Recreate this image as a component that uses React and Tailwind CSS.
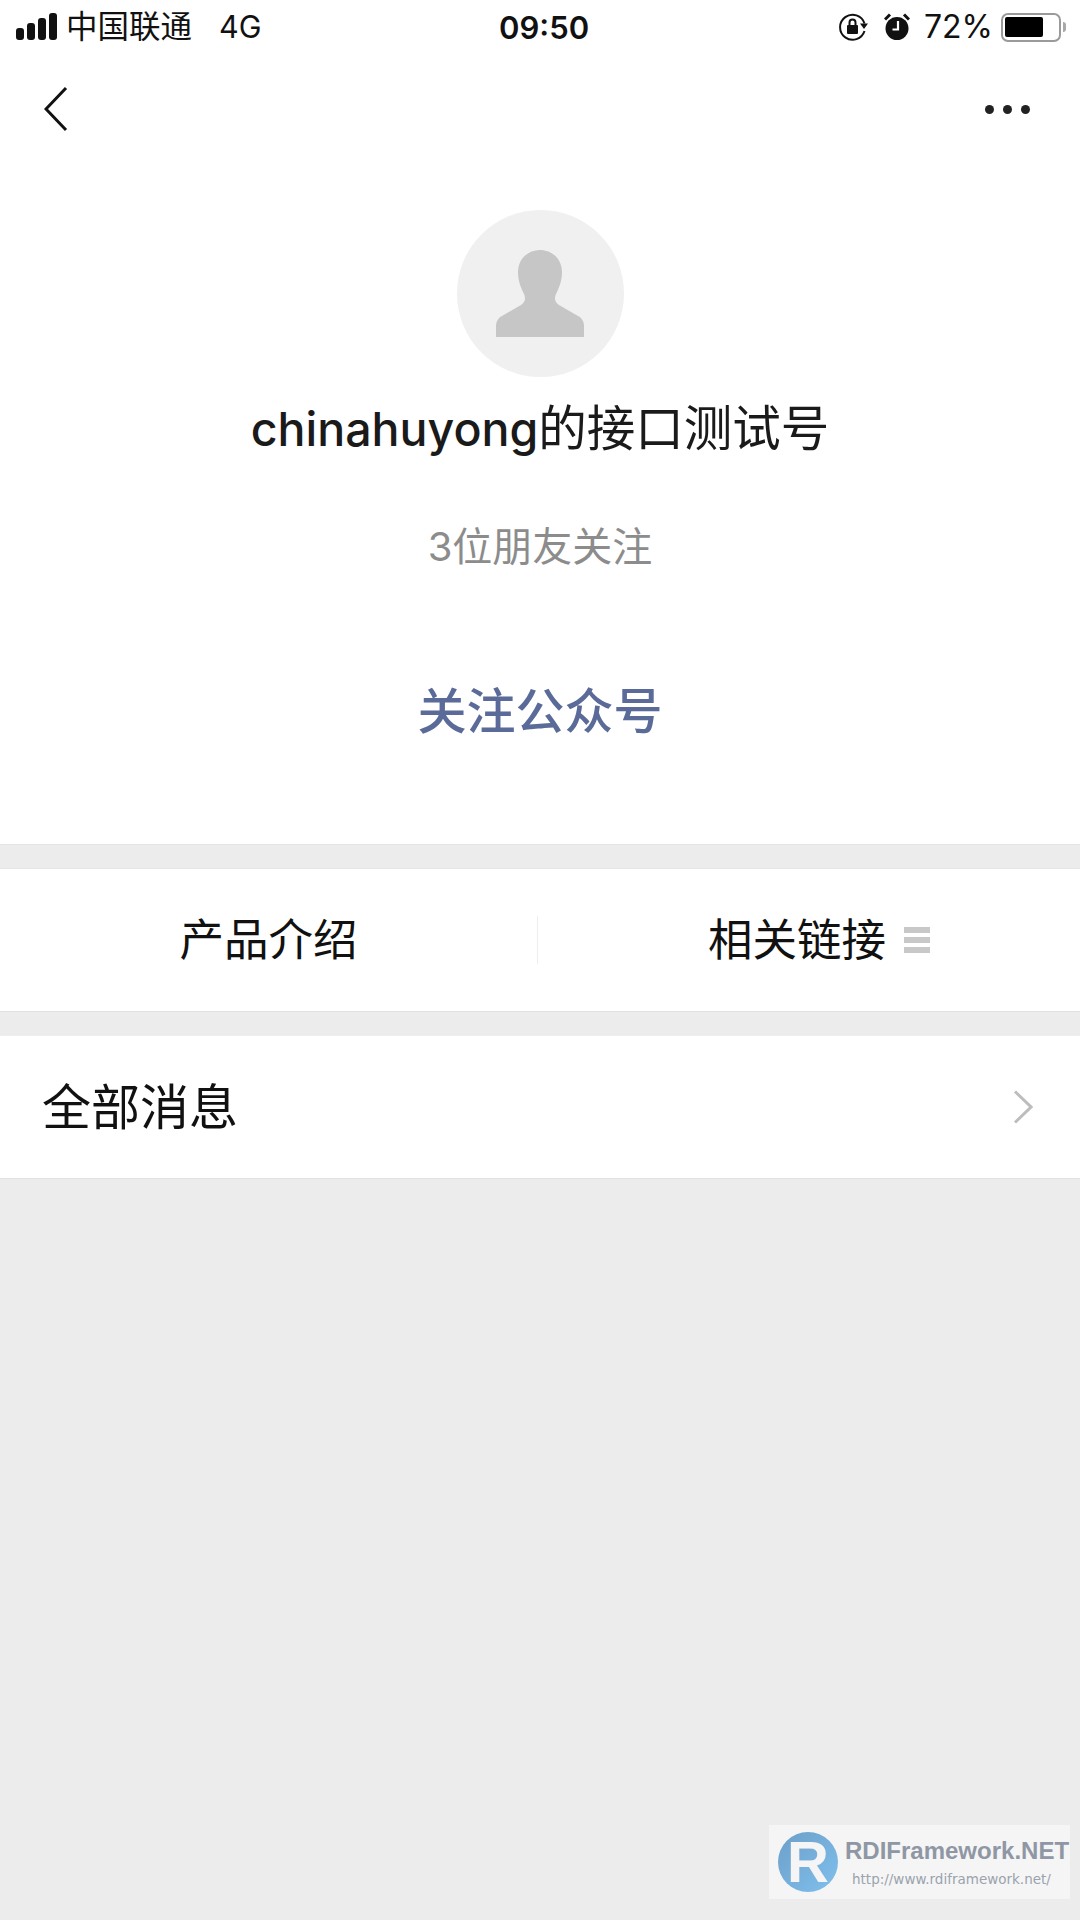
import React from 'react';

const SANS = 'font-["Inter","Noto_Sans_CJK_SC",sans-serif]';

const SignalBars = () => (
  <svg width="42" height="28" viewBox="0 0 42 28" className="shrink-0">
    <rect x="0" y="15" width="8" height="12" rx="3" fill="#111" />
    <rect x="11" y="10" width="8" height="17" rx="3" fill="#111" />
    <rect x="22" y="5" width="8" height="22" rx="3" fill="#111" />
    <rect x="33" y="0" width="8" height="27" rx="3" fill="#111" />
  </svg>
);

const RotationLock = () => (
  <svg width="30" height="30" viewBox="0 0 30 30" className="shrink-0">
    <path d="M26.5 11.5A12.5 12.5 0 1 0 26.5 19" fill="none" stroke="#111" strokeWidth="2" />
    <path d="M22 11.5h8l-4 5.5z" fill="#111" />
    <rect x="9" y="13" width="11" height="9" rx="1" fill="#111" />
    <path d="M11.5 13V10.5a3 3 0 0 1 6 0V13" fill="none" stroke="#111" strokeWidth="2" />
  </svg>
);

const AlarmClock = () => (
  <svg width="26" height="28" viewBox="0 0 26 28" className="shrink-0">
    <circle cx="13" cy="15.5" r="11.5" fill="#111" />
    <path d="M14 8v8.5H8.5" fill="none" stroke="#fff" strokeWidth="2.2" />
    <path d="M1 6.5 6 1.5M25 6.5 20 1.5" stroke="#111" strokeWidth="3" />
  </svg>
);

const Battery = () => (
  <div className="flex items-center gap-[2px]">
    <div className="flex h-[29px] w-[60px] items-center rounded-[7px] border-2 border-[#9a9a9a] p-[2px]">
      <div className="h-[20px] w-[38px] rounded-[2px] bg-black" />
    </div>
    <div className="h-[10px] w-[3px] rounded-r-full bg-[#a8a8a8]" />
  </div>
);

const StatusBar = () => (
  <div className="flex h-[54px] items-center pl-[16px] pr-[14px] text-[#111]">
    <div className="flex w-[483px] items-center">
      <SignalBars />
      <span className="ml-[8px] text-[31.5px] leading-none">中国联通</span>
      <span className="ml-[27px] text-[30.5px] leading-none">4G</span>
    </div>
    <span className="text-[31px] font-semibold leading-none">09:50</span>
    <div className="ml-auto flex items-center">
      <RotationLock />
      <div className="ml-[16px]"><AlarmClock /></div>
      <span className="ml-[14px] text-[32px] leading-none">72%</span>
      <div className="ml-[8px]"><Battery /></div>
    </div>
  </div>
);

const NavBar = () => (
  <div className="flex h-[110px] items-center justify-between pl-[44px] pr-[50px]">
    <svg width="24" height="46" viewBox="0 0 24 46">
      <path d="M22 2 2 23l20 21" fill="none" stroke="#111" strokeWidth="3" />
    </svg>
    <div className="flex gap-[9px]">
      <span className="h-[9px] w-[9px] rounded-full bg-[#222]" />
      <span className="h-[9px] w-[9px] rounded-full bg-[#222]" />
      <span className="h-[9px] w-[9px] rounded-full bg-[#222]" />
    </div>
  </div>
);

const Avatar = () => (
  <div className="flex h-[167px] w-[167px] items-center justify-center rounded-full bg-[#f0f0f0]">
    <svg width="88" height="88" viewBox="0 0 88 88">
      <path
        d="M44 0c12 0 22 9 22 22 0 9-3 16-6 22-2 5-1 8 3 11l19 11c4 2 6 6 6 10v11H0V76c0-4 2-8 6-10l19-11c4-3 5-6 3-11-3-6-6-13-6-22C22 9 32 0 44 0z"
        fill="#c6c6c6"
      />
    </svg>
  </div>
);

const Watermark = () => (
  <div className="absolute left-[769px] top-[1825px] flex h-[74px] w-[301px] items-center bg-[#f5f5f5] pl-[9px]">
    <div className="flex h-[60px] w-[60px] shrink-0 items-center justify-center rounded-full bg-gradient-to-br from-[#6c9fc8] to-[#80c0ee]">
      <span className='font-["Liberation_Sans",sans-serif] text-[58px] font-bold leading-none text-[#f5f5f5]'>R</span>
    </div>
    <div className="ml-[7px] flex flex-col">
      <span className='font-["Liberation_Sans",sans-serif] text-[24px] font-bold leading-[30px] text-[#8f97a5] whitespace-nowrap'>RDIFramework.NET</span>
      <span className='ml-[7px] mt-[3px] font-["DejaVu_Sans",sans-serif] text-[13.5px] leading-[20px] text-[#9aa3ae] whitespace-nowrap'>http://www.rdiframework.net/</span>
    </div>
  </div>
);

const App = () => {
  return (
    <div className={`relative flex min-h-[1920px] w-[1080px] flex-col bg-[#ececec] ${SANS}`}>
      <div className="h-[845px] border-b border-[#e4e4e4] bg-white">
        <StatusBar />
        <NavBar />
        <div className="flex flex-col items-center pt-[46px]">
          <Avatar />
          <h1 className="mt-[22px] text-[48.5px] font-normal leading-[60px] text-[#1a1a1a]">
            <span className="text-[46.5px] font-medium">chinahuyong</span>的接口测试号
          </h1>
          <p className="mt-[58px] text-[40px] leading-[60px] text-[#8c8c8c]">3位朋友关注</p>
          <button className="mt-[105px] text-[49px] font-medium leading-[60px] text-[#5b6b99]">关注公众号</button>
        </div>
      </div>

      <div className="mt-[23px] flex h-[144px] items-center border-y border-t-[#e6e6e6] border-b-[#e2e2e2] bg-white">
        <div className="w-[537px] text-center text-[44.5px] leading-none text-[#111]">产品介绍</div>
        <div className="h-[48px] w-px bg-[#eeeeee]" />
        <div className="flex flex-1 items-center justify-center pl-[20px]">
          <span className="text-[44.5px] leading-none text-[#111]">相关链接</span>
          <div className="ml-[18px] flex w-[26px] flex-col gap-[4px]">
            <span className="h-[6px] bg-[#c8c8c8]" />
            <span className="h-[6px] bg-[#c8c8c8]" />
            <span className="h-[6px] bg-[#c8c8c8]" />
          </div>
        </div>
      </div>

      <div className="mt-[23px] flex h-[144px] items-center justify-between border-y border-t-[#eeeeee] border-b-[#e2e2e2] bg-white pl-[42px] pr-[47px]">
        <span className="text-[49px] leading-none text-[#111]">全部消息</span>
        <svg width="20" height="34" viewBox="0 0 20 34">
          <path d="M2 1.5 18 17 2 32.5" fill="none" stroke="#bdbdbd" strokeWidth="3" />
        </svg>
      </div>

      <Watermark />
    </div>
  );
};

export default App;
